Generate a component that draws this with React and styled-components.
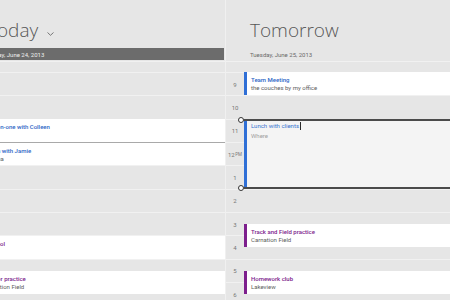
import React from 'react';
import styled, { createGlobalStyle } from 'styled-components';

const SLOT = 70 / 6; // px per half hour
const START = 8; // body begins at 8:00

const Global = createGlobalStyle`
  html, body { margin: 0; padding: 0; }
  body {
    background: #e6e6e6;
    font-family: Roboto, "Open Sans", sans-serif;
    overflow: hidden;
  }
`;

const Viewport = styled.div`
  width: 450px;
  height: 300px;
  overflow: hidden;
  background: #e6e6e6;
`;

const Strip = styled.div`
  display: flex;
  width: max-content;
  margin-left: -42px;
`;

const Day = styled.section`
  flex: none;
  width: ${p => p.$width}px;
  box-sizing: border-box;
  border-left: 1px solid #f0f0f0;
  display: flex;
  flex-direction: column;
`;

const Header = styled.header`
  height: 60.5px;
  display: flex;
  flex-direction: column;
  padding-left: 18px;
`;

const Title = styled.h1`
  margin: 0;
  padding: 18px 0 0 ${p => (p.$current ? 10 : 6)}px;
  height: 24px;
  display: flex;
  align-items: baseline;
  font-family: "Open Sans", "Noto Sans", sans-serif;
  font-size: 19px;
  line-height: 24px;
  font-weight: 300;
  color: #565656;
  white-space: nowrap;
`;

const Chevron = styled.svg`
  margin-left: 9px;
  width: 7px;
  height: 4px;
  align-self: center;
  margin-top: 7px;
`;

const DateLine = styled.div`
  margin-top: 6px;
  margin-right: ${p => (p.$current ? '1px' : '0')};
  height: 12px;
  padding-left: 6px;
  display: flex;
  align-items: center;
  font-size: 6px;
  white-space: nowrap;
  background: ${p => (p.$current ? '#6c6c6c' : 'transparent')};
  color: ${p => (p.$current ? '#eeeeee' : '#6a6a6a')};
`;

const Body = styled.div`
  position: relative;
  height: 240px;
`;

const Row = styled.div`
  display: grid;
  grid-template-columns: 18px 1fr;
  box-sizing: border-box;
  height: ${p => p.$h}px;
  border-top: 1px solid #f1f1f1;
`;

const HourLabel = styled.div`
  display: flex;
  align-items: center;
  justify-content: center;
  font-size: 6px;
  color: #767676;
  white-space: nowrap;
`;

const Suffix = styled.span`
  font-size: 4.5px;
  margin-left: 0.5px;
`;

const Lane = styled.div`
  position: absolute;
  top: 0;
  bottom: 0;
  left: 18px;
  right: 0;
`;

const Event = styled.div`
  position: absolute;
  left: 0;
  right: 0;
  box-sizing: border-box;
  background: ${p => (p.$selected ? '#f4f4f4' : '#ffffff')};
  box-shadow: inset 3px 0 0 ${p => p.$color};
  border-top: ${p =>
    p.$selected ? '2px solid #4b4b4b' : p.$divider ? '1px solid #a9a9a9' : '0'};
  border-bottom: ${p => (p.$selected ? '2px solid #4b4b4b' : '0')};
  padding: ${p => (p.$selected ? '1px' : '4px')} 0 0 7px;
`;

const EventTitle = styled.div`
  font-size: 6px;
  line-height: 8px;
  font-weight: ${p => (p.$editing ? 400 : 500)};
  color: ${p => p.$color};
  white-space: nowrap;
  display: flex;
  align-items: center;
`;

const EventSub = styled.div`
  font-size: 6px;
  line-height: 8px;
  margin-top: ${p => (p.$editing ? '2px' : '0')};
  color: ${p => (p.$placeholder ? '#a0a0a0' : '#5e5e5e')};
  white-space: nowrap;
`;

const Caret = styled.span`
  display: inline-block;
  width: 1px;
  height: 8px;
  margin-left: 0.5px;
  background: #2a2a2a;
`;

const Handle = styled.span`
  position: absolute;
  left: -6px;
  width: 6px;
  height: 6px;
  box-sizing: border-box;
  border-radius: 50%;
  border: 1.5px solid #333;
  background: #fff;
  ${p => (p.$bottom ? 'bottom: -4px;' : 'top: -4px;')}
`;

const BLUE = '#2c66c6';
const BLUE_BAR = '#2f6fd6';
const PURPLE = '#7c1b8c';
const PURPLE_BAR = '#7d1f8d';

const hourText = h => {
  if (h === 12) return <>12<Suffix>PM</Suffix></>;
  return h > 12 ? h - 12 : h;
};

const ROW_HOURS = [9, 10, 11, 12, 13, 14, 15, 16, 17, 18];

function Grid() {
  return (
    <>
      <Row $h={SLOT}>
        <HourLabel />
        <div />
      </Row>
      {ROW_HOURS.map(h => (
        <Row key={h} $h={SLOT * 2}>
          <HourLabel>{hourText(h)}</HourLabel>
          <div />
        </Row>
      ))}
    </>
  );
}

function CalEvent({ ev }) {
  const top = (ev.start - START) * 2 * SLOT;
  const height = (ev.end - ev.start) * 2 * SLOT;
  const isPurple = ev.tone === 'purple';
  return (
    <Event
      style={{ top, height }}
      $color={isPurple ? PURPLE_BAR : BLUE_BAR}
      $selected={ev.selected}
      $divider={ev.divider}
    >
      {ev.selected && <Handle />}
      {ev.selected && <Handle $bottom />}
      <EventTitle
        $editing={ev.selected}
        $color={ev.selected ? '#3a74d0' : isPurple ? PURPLE : BLUE}
      >
        {ev.title}
        {ev.selected && <Caret />}
      </EventTitle>
      {ev.sub && (
        <EventSub $editing={ev.selected} $placeholder={ev.selected}>
          {ev.sub}
        </EventSub>
      )}
    </Event>
  );
}

const days = [
  {
    name: 'Today',
    date: 'Monday, June 24, 2013',
    current: true,
    width: 267,
    events: [
      { title: 'One-on-one with Colleen', start: 10.5, end: 11.5 },
      { title: 'Lunch with Jamie', sub: 'Medina', start: 11.5, end: 12.5, divider: true },
      { title: 'Carpool', start: 15.5, end: 16.5, tone: 'purple' },
      { title: 'Soccer practice', sub: 'Carnation Field', start: 17, end: 18, tone: 'purple' },
    ],
  },
  {
    name: 'Tomorrow',
    date: 'Tuesday, June 25, 2013',
    width: 263,
    events: [
      { title: 'Team Meeting', sub: 'the couches by my office', start: 8.5, end: 9.5 },
      { title: 'Lunch with clients', sub: 'Where', start: 10.5, end: 13.5, selected: true },
      { title: 'Track and Field practice', sub: 'Carnation Field', start: 15, end: 16, tone: 'purple' },
      { title: 'Homework club', sub: 'Lakeview', start: 17, end: 18, tone: 'purple' },
    ],
  },
];

export default function App() {
  return (
    <Viewport>
      <Global />
      <Strip>
        {days.map(d => (
          <Day key={d.name} $width={d.width}>
            <Header>
              <Title $current={d.current}>
                {d.name}
                {d.current && (
                  <Chevron viewBox="0 0 7 4">
                    <polyline points="0.5,0.5 3.5,3.3 6.5,0.5" fill="none" stroke="#6a6a6a" strokeWidth="0.9" />
                  </Chevron>
                )}
              </Title>
              <DateLine $current={d.current}>{d.date}</DateLine>
            </Header>
            <Body>
              <Grid />
              <Lane>
                {d.events.map(ev => (
                  <CalEvent key={ev.title} ev={ev} />
                ))}
              </Lane>
            </Body>
          </Day>
        ))}
      </Strip>
    </Viewport>
  );
}
